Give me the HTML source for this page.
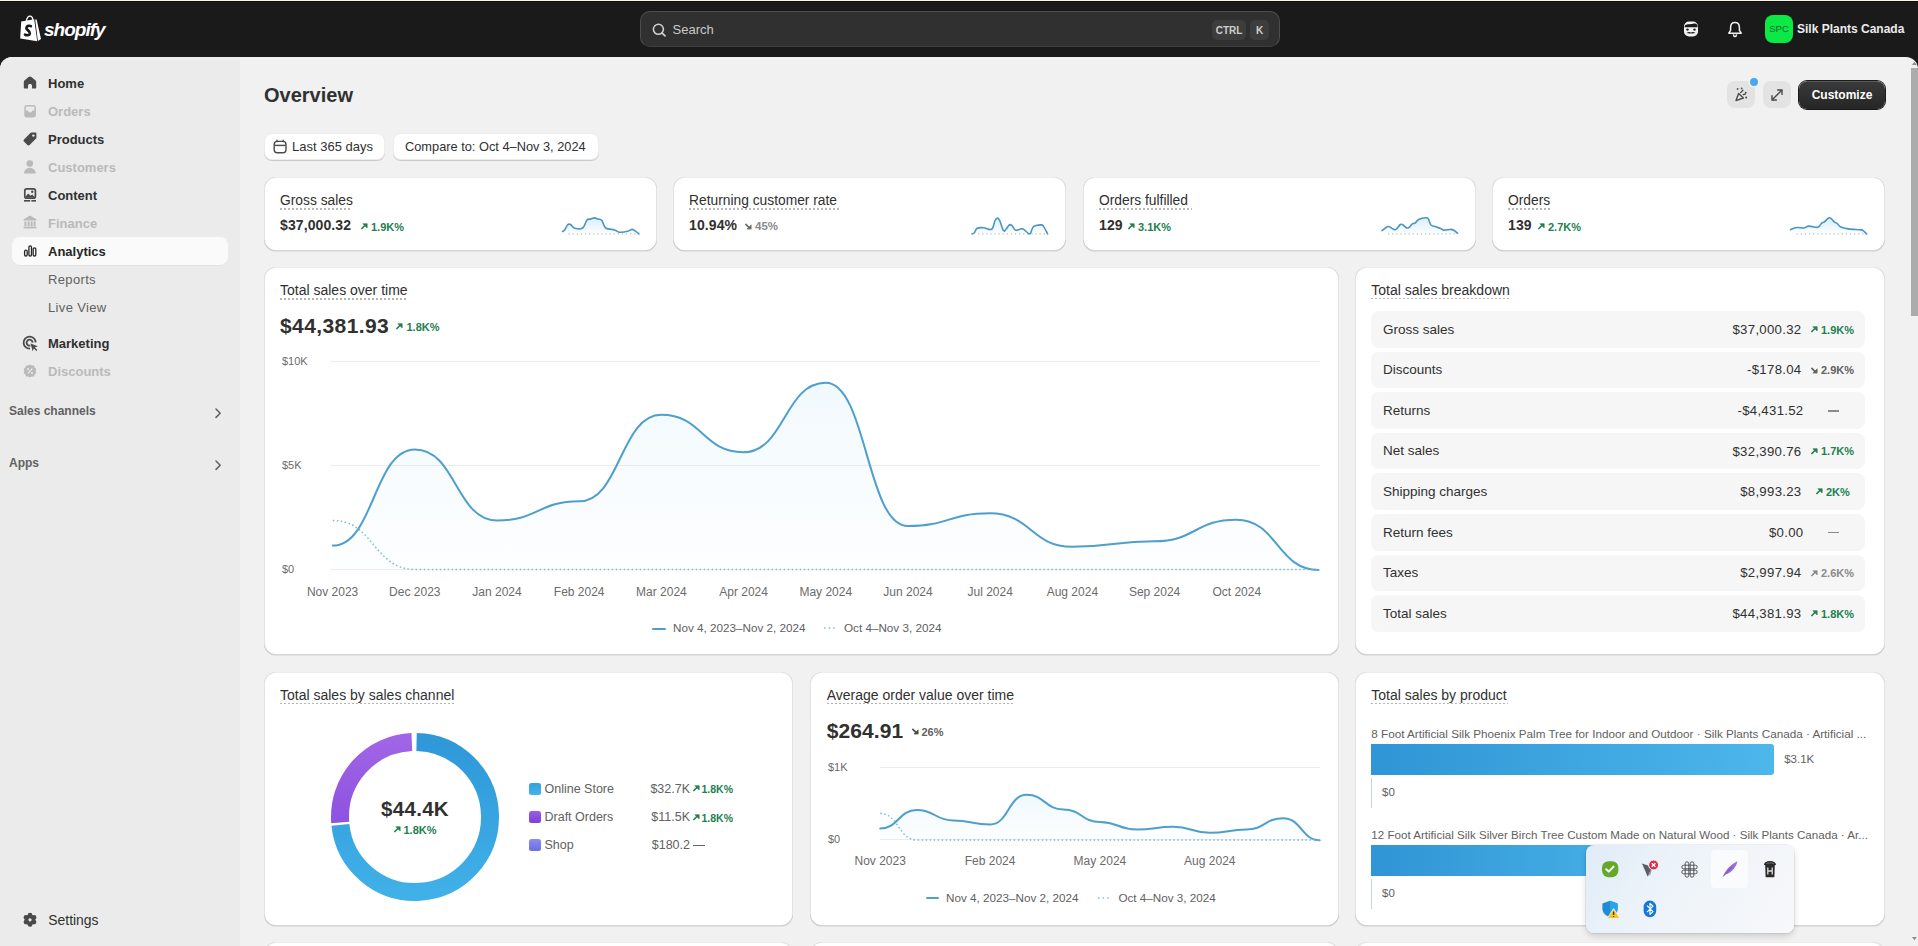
<!DOCTYPE html>
<html><head><meta charset="utf-8">
<style>
*{box-sizing:border-box;margin:0;padding:0}
html,body{width:1918px;height:946px;overflow:hidden;background:#1a1a1a;font-family:"Liberation Sans",sans-serif;color:#303030}
body{position:relative}
.abs{position:absolute}
.t{position:absolute;white-space:nowrap;line-height:1}
.card{position:absolute;background:#fff;border-radius:12px;box-shadow:0 1px 0 0 rgba(26,26,26,.07),inset 0 -1px 0 0 rgba(0,0,0,.16),inset 1px 0 0 0 rgba(0,0,0,.11),inset -1px 0 0 0 rgba(0,0,0,.11),inset 0 1px 0 0 rgba(0,0,0,.07)}
.dot{background-image:linear-gradient(to right,#bdbdbd 50%,transparent 50%);background-size:4px 1.5px;background-repeat:repeat-x}
</style></head><body>

<div class="abs" style="left:0px;top:0px;width:1918px;height:1px;background:#fbf5ee"></div>
<div class="abs" style="left:0px;top:1px;width:1918px;height:1px;background:#110d0a"></div>
<div class="abs" style="left:0px;top:57px;width:1918px;height:889px;background:#f1f1f1;border-top-left-radius:12px;border-top-right-radius:12px"></div>
<div class="abs" style="left:0px;top:57px;width:240px;height:889px;background:#ebebeb;border-top-left-radius:12px"></div>
<div class="abs" style="left:1911px;top:68px;width:7px;height:248px;background:#acacac"></div>
<svg class="abs" style="left:18px;top:14px;" width="26" height="30" viewBox="0 0 26 30">
<path d="M3.2 7.6 L16.2 5.2 L19.2 27.2 L2.2 24.4 Z" fill="#fff"/>
<path d="M17.2 5.4 L18.6 5.6 L23 25 L19.9 27 Z" fill="#fff"/>
<path d="M8.4 7.2 C8.6 3.6 10.6 1.9 12.4 2.2 C14 2.5 14.8 4.2 15 6.2" stroke="#fff" stroke-width="1.3" fill="none"/>
<path d="M12.8 12.2 C11.6 11.4 8.6 11.6 8.4 14 C8.2 16.4 12.2 16.6 11.8 19.4 C11.4 21.6 8.6 21.6 7 20.6" stroke="#1a1a1a" stroke-width="2.7" fill="none" stroke-linecap="round"/>
</svg>
<div class="t" style="top:20.22px;font-size:19px;font-weight:700;color:#ffffff;left:44px;font-style:italic;letter-spacing:-1px">shopify</div>
<div class="abs" style="left:640px;top:11px;width:640px;height:36px;background:#303030;border:1px solid #4d4d4d;border-bottom-color:#3d3d3d;border-radius:10px"></div>
<svg class="abs" style="left:650px;top:21px;" width="18" height="18" viewBox="0 0 18 18"><circle cx="8.4" cy="8.3" r="5" stroke="#cfcfcf" stroke-width="1.6" fill="none"/><path d="M12 11.9 L15 14.9" stroke="#cfcfcf" stroke-width="1.7" stroke-linecap="round"/></svg>
<div class="t" style="top:23.00px;font-size:13px;font-weight:400;color:#c9c9c9;left:672.5px;">Search</div>
<div class="abs" style="left:1212px;top:20px;width:34px;height:20px;background:#3d3d3d;border-radius:5px"></div>
<div class="t" style="top:25.54px;font-size:10px;font-weight:700;color:#cfcfcf;left:929px;width:600px;text-align:center;">CTRL</div>
<div class="abs" style="left:1250px;top:20px;width:19px;height:20px;background:#3d3d3d;border-radius:5px"></div>
<div class="t" style="top:25.54px;font-size:10px;font-weight:700;color:#cfcfcf;left:959.5px;width:600px;text-align:center;">K</div>
<svg class="abs" style="left:1682px;top:19px;" width="18" height="20" viewBox="0 0 18 20">
<rect x="2" y="2.5" width="14" height="15" rx="5" fill="#f2f2f2"/>
<path d="M3 6.5 C5 4.2 9 6 12 4.6 C13.5 4 15 5 15.5 6.5 L15.5 8.2 L2.5 8.2 Z" fill="#1a1a1a"/>
<circle cx="5.5" cy="10.6" r="1.2" fill="#1a1a1a"/><circle cx="12.5" cy="10.6" r="1.2" fill="#1a1a1a"/>
<path d="M4.5 14 C6.5 12.4 8 12.8 9 13.6 C10 12.8 11.5 12.4 13.5 14 C11.5 14.6 10 14.6 9 14.2 C8 14.6 6.5 14.6 4.5 14 Z" fill="#1a1a1a"/>
</svg>
<svg class="abs" style="left:1726px;top:20px;" width="18" height="18" viewBox="0 0 18 18">
<path d="M9 2.6 C6.2 2.6 4.6 4.8 4.6 7.6 L4.6 10.4 L2.8 13.2 L15.2 13.2 L13.4 10.4 L13.4 7.6 C13.4 4.8 11.8 2.6 9 2.6 Z" stroke="#f2f2f2" stroke-width="1.5" fill="none" stroke-linejoin="round"/>
<path d="M7.4 14.4 C7.6 16 8.3 16.6 9 16.6 C9.7 16.6 10.4 16 10.6 14.4" stroke="#f2f2f2" stroke-width="1.5" fill="none"/>
</svg>
<div class="abs" style="left:1765px;top:15px;width:28px;height:28px;background:#0ce845;border-radius:8px"></div>
<div class="t" style="top:24.16px;font-size:9.5px;font-weight:400;color:#0a6e2a;left:1479px;width:600px;text-align:center;">SPC</div>
<div class="t" style="top:22.84px;font-size:12px;font-weight:700;color:#ececec;left:1797px;">Silk Plants Canada</div>
<div class="abs" style="left:12px;top:237px;width:216px;height:28px;background:#fafafa;border-radius:8px;box-shadow:0 1px 0 rgba(0,0,0,.03)"></div>
<div class="t" style="top:77.00px;font-size:13px;font-weight:700;color:#303030;left:48px;">Home</div>
<div class="t" style="top:105.00px;font-size:13px;font-weight:700;color:#bababa;left:48px;">Orders</div>
<div class="t" style="top:133.00px;font-size:13px;font-weight:700;color:#303030;left:48px;">Products</div>
<div class="t" style="top:161.00px;font-size:13px;font-weight:700;color:#bababa;left:48px;">Customers</div>
<div class="t" style="top:189.00px;font-size:13px;font-weight:700;color:#303030;left:48px;">Content</div>
<div class="t" style="top:217.00px;font-size:13px;font-weight:700;color:#bababa;left:48px;">Finance</div>
<div class="t" style="top:245.00px;font-size:13px;font-weight:700;color:#262626;left:48px;">Analytics</div>
<div class="t" style="top:273.20px;font-size:13px;font-weight:400;color:#616161;left:48px;letter-spacing:.35px">Reports</div>
<div class="t" style="top:301.20px;font-size:13px;font-weight:400;color:#616161;left:48px;letter-spacing:.35px">Live View</div>
<div class="t" style="top:337.00px;font-size:13px;font-weight:700;color:#303030;left:48px;">Marketing</div>
<div class="t" style="top:365.00px;font-size:13px;font-weight:700;color:#bababa;left:48px;">Discounts</div>
<div class="t" style="top:405.04px;font-size:12px;font-weight:700;color:#616161;left:9px;">Sales channels</div>
<div class="t" style="top:457.44px;font-size:12px;font-weight:700;color:#616161;left:9px;">Apps</div>
<svg class="abs" style="left:211px;top:404.5px;" width="14" height="16" viewBox="0 0 14 16"><path d="M5 4 L9.2 8.2 L5 12.4" stroke="#616161" stroke-width="1.5" fill="none" stroke-linecap="round" stroke-linejoin="round"/></svg>
<svg class="abs" style="left:211px;top:456.5px;" width="14" height="16" viewBox="0 0 14 16"><path d="M5 4 L9.2 8.2 L5 12.4" stroke="#616161" stroke-width="1.5" fill="none" stroke-linecap="round" stroke-linejoin="round"/></svg>
<div class="t" style="top:914.03px;font-size:13.9px;font-weight:400;color:#303030;left:48.3px;">Settings</div>
<svg class="abs" style="left:20px;top:73px;" width="20" height="20" viewBox="0 0 20 20"><path d="M10 3.4 C10.6 3.4 11 3.7 11.4 4 L15.6 7.6 C16 8 16.2 8.4 16.2 9 L16.2 14.4 C16.2 15.2 15.6 15.6 14.9 15.6 L12 15.6 L12 12.6 C12 11.6 11.2 11 10 11 C8.8 11 8 11.6 8 12.6 L8 15.6 L5.1 15.6 C4.4 15.6 3.8 15.2 3.8 14.4 L3.8 9 C3.8 8.4 4 8 4.4 7.6 L8.6 4 C9 3.7 9.4 3.4 10 3.4 Z" fill="#4a4a4a"/></svg>
<svg class="abs" style="left:20px;top:100.5px;" width="20" height="20" viewBox="0 0 20 20"><rect x="4.3" y="4" width="11.6" height="12.4" rx="2.6" fill="#bababa"/><path d="M5.8 5.6 L14.4 5.6 L14.4 9.6 L12.4 9.6 C12 10.8 11.2 11.4 10.1 11.4 C9 11.4 8.2 10.8 7.8 9.6 L5.8 9.6 Z" fill="#ebebeb"/></svg>
<svg class="abs" style="left:20px;top:129px;" width="20" height="20" viewBox="0 0 20 20"><path d="M11.6 3.6 L15.4 3.6 C16 3.6 16.4 4 16.4 4.6 L16.4 8.4 C16.4 9 16.2 9.4 15.8 9.8 L9.6 16 C9 16.6 8 16.6 7.4 16 L4 12.6 C3.4 12 3.4 11 4 10.4 L10.2 4.2 C10.6 3.8 11 3.6 11.6 3.6 Z" fill="#4a4a4a"/><circle cx="13.4" cy="6.6" r="1.2" fill="#ebebeb"/></svg>
<svg class="abs" style="left:20px;top:155px;" width="20" height="20" viewBox="0 0 20 20"><circle cx="9.8" cy="8.5" r="3.3" fill="#bababa"/><path d="M4 18.6 C4 15.4 6.6 12.8 9.8 12.8 C13 12.8 15.8 15.4 15.8 18.6 Z" fill="#bababa"/></svg>
<svg class="abs" style="left:20px;top:185px;" width="20" height="20" viewBox="0 0 20 20"><rect x="4.8" y="3.8" width="10.6" height="9.4" rx="2" stroke="#4a4a4a" stroke-width="1.7" fill="none"/><path d="M5.6 11.4 L8.2 8.6 L10.6 10.8 L12.2 9.6 L14.6 12 L14.6 12.6 L5.6 12.6 Z" fill="#4a4a4a"/><circle cx="12.2" cy="6.8" r="1.2" fill="#4a4a4a"/><rect x="4" y="15" width="6.2" height="1.6" fill="#4a4a4a"/><rect x="11.4" y="15" width="4.6" height="1.6" fill="#4a4a4a"/></svg>
<svg class="abs" style="left:20px;top:212px;" width="20" height="20" viewBox="0 0 20 20"><path d="M10 3.6 L16.4 7.2 L16.4 8.6 L3.6 8.6 L3.6 7.2 Z" fill="#bababa"/><rect x="4.4" y="9.4" width="2" height="4.6" fill="#bababa"/><rect x="7.6" y="9.4" width="2" height="4.6" fill="#bababa"/><rect x="10.6" y="9.4" width="2" height="4.6" fill="#bababa"/><rect x="13.6" y="9.4" width="2" height="4.6" fill="#bababa"/><rect x="3.6" y="14.6" width="12.8" height="1.8" fill="#bababa"/></svg>
<svg class="abs" style="left:20px;top:241px;" width="20" height="20" viewBox="0 0 20 20"><rect x="4.6" y="9.2" width="2.6" height="5.8" rx="1.3" stroke="#262626" stroke-width="1.3" fill="none"/><rect x="8.9" y="4.8" width="2.6" height="10.2" rx="1.3" stroke="#262626" stroke-width="1.3" fill="none"/><rect x="13.2" y="6.8" width="2.6" height="8.2" rx="1.3" stroke="#262626" stroke-width="1.3" fill="none"/></svg>
<svg class="abs" style="left:20px;top:333px;" width="20" height="20" viewBox="0 0 20 20"><path d="M15.6 9.4 A6 6 0 1 0 10 15.6" stroke="#4a4a4a" stroke-width="1.8" fill="none"/><path d="M12.6 9.6 A3 3 0 1 0 10.4 12.6" stroke="#4a4a4a" stroke-width="1.8" fill="none"/><path d="M10.6 10.6 L17.8 13.2 L14.8 14.4 L17.4 17 L16.4 18 L13.8 15.4 L12.6 18.2 Z" fill="#4a4a4a"/></svg>
<svg class="abs" style="left:20px;top:361px;" width="20" height="20" viewBox="0 0 20 20"><path d="M10 3.4 L11.8 4.6 L14 4.6 L14.6 6.6 L16.4 8 L15.6 10 L16.4 12 L14.6 13.4 L14 15.4 L11.8 15.4 L10 16.6 L8.2 15.4 L6 15.4 L5.4 13.4 L3.6 12 L4.4 10 L3.6 8 L5.4 6.6 L6 4.6 L8.2 4.6 Z" fill="#bababa"/><path d="M7.8 12.4 L12.2 7.6" stroke="#ebebeb" stroke-width="1.3"/><circle cx="8" cy="8" r="1" fill="#ebebeb"/><circle cx="12" cy="12" r="1" fill="#ebebeb"/></svg>
<svg class="abs" style="left:20px;top:910px;" width="20" height="20" viewBox="0 0 20 20"><circle cx="10" cy="9.8" r="5.2" fill="#4a4a4a"/><circle cx="10.00" cy="5.20" r="2.4" fill="#4a4a4a"/><circle cx="13.98" cy="7.50" r="2.4" fill="#4a4a4a"/><circle cx="13.98" cy="12.10" r="2.4" fill="#4a4a4a"/><circle cx="10.00" cy="14.40" r="2.4" fill="#4a4a4a"/><circle cx="6.02" cy="12.10" r="2.4" fill="#4a4a4a"/><circle cx="6.02" cy="7.50" r="2.4" fill="#4a4a4a"/><circle cx="10" cy="9.8" r="1.6" fill="#ebebeb"/></svg>
<div class="t" style="top:85.07px;font-size:20px;font-weight:700;color:#303030;left:264px;">Overview</div>
<div class="abs" style="left:1727px;top:81px;width:28px;height:27px;background:#e3e3e3;border-radius:8px"></div>
<div class="abs" style="left:1763px;top:81px;width:28px;height:27px;background:#e3e3e3;border-radius:8px"></div>
<div class="abs" style="left:1750px;top:78px;width:8px;height:8px;background:#4aa8f0;border-radius:50%;box-shadow:0 0 0 1.5px #f1f1f1"></div>
<svg class="abs" style="left:1731px;top:84px;" width="20" height="20" viewBox="0 0 20 20">
<path d="M5 16.6 L7.6 9.4 L12.4 14 Z" stroke="#4a4a4a" stroke-width="1.4" fill="none" stroke-linejoin="round"/>
<circle cx="6.6" cy="5" r="0.9" fill="#4a4a4a"/><circle cx="10.6" cy="4.4" r="0.9" fill="#4a4a4a"/><circle cx="14.8" cy="8.6" r="0.9" fill="#4a4a4a"/><circle cx="15.2" cy="13.4" r="1" fill="#4a4a4a"/>
<path d="M9.6 8.6 L12 6.2 M12.2 10.6 L14.4 10" stroke="#4a4a4a" stroke-width="1.3" stroke-linecap="round"/>
</svg>
<svg class="abs" style="left:1767px;top:85px;" width="20" height="20" viewBox="0 0 20 20">
<path d="M5.2 14.8 L14.8 5.2" stroke="#4a4a4a" stroke-width="1.4" stroke-linecap="round"/>
<path d="M10.6 5 L15 5 L15 9.4" stroke="#4a4a4a" stroke-width="1.4" fill="none" stroke-linecap="round" stroke-linejoin="round"/>
<path d="M5 10.6 L5 15 L9.4 15" stroke="#4a4a4a" stroke-width="1.4" fill="none" stroke-linecap="round" stroke-linejoin="round"/>
</svg>
<div class="abs" style="left:1799px;top:81px;width:86px;height:28px;background:linear-gradient(#3a3a3a,#262626);border-radius:8px;box-shadow:0 0 0 1px #1a1a1a,inset 0 1px 0 rgba(255,255,255,.18)"></div>
<div class="t" style="top:89.14px;font-size:12px;font-weight:700;color:#ffffff;left:1542px;width:600px;text-align:center;">Customize</div>
<div class="abs" style="left:264px;top:133px;width:121px;height:27px;background:#fff;border-radius:8px;box-shadow:0 1px 0 0 rgba(0,0,0,.16),inset 0 0 0 1px rgba(0,0,0,.07)"></div>
<svg class="abs" style="left:271px;top:137px;" width="20" height="20" viewBox="0 0 20 20"><rect x="3.2" y="4.4" width="11.8" height="11.4" rx="3" stroke="#4a4a4a" stroke-width="1.4" fill="none"/><path d="M3.6 8.4 L14.6 8.4" stroke="#4a4a4a" stroke-width="1.4"/><path d="M6 3.2 L6 4.6 M12.2 3.2 L12.2 4.6" stroke="#4a4a4a" stroke-width="1.3" stroke-linecap="round"/></svg>
<div class="t" style="top:140.20px;font-size:13px;font-weight:400;color:#303030;left:292px;">Last 365 days</div>
<div class="abs" style="left:393px;top:133px;width:206px;height:27px;background:#fff;border-radius:8px;box-shadow:0 1px 0 0 rgba(0,0,0,.16),inset 0 0 0 1px rgba(0,0,0,.07)"></div>
<div class="t" style="top:141.16px;font-size:12.8px;font-weight:400;color:#303030;left:405px;">Compare to: Oct 4–Nov 3, 2024</div>
<div class="card" style="left:264px;top:177px;width:393px;height:74px"></div>
<div class="t" style="top:193.52px;font-size:13.8px;font-weight:400;color:#303030;left:280px;">Gross sales</div>
<div class="abs" style="left:280px;top:208.2px;width:72px;height:1.5px;background-image:linear-gradient(to right,#b8b8b8 50%,transparent 50%);background-size:4px 1.5px"></div>
<div class="t" style="top:218.15px;font-size:14px;font-weight:700;color:#303030;left:280px;letter-spacing:.1px">$37,000.32</div>
<div class="card" style="left:673px;top:177px;width:393px;height:74px"></div>
<div class="t" style="top:193.52px;font-size:13.8px;font-weight:400;color:#303030;left:689px;">Returning customer rate</div>
<div class="abs" style="left:689px;top:208.2px;width:151px;height:1.5px;background-image:linear-gradient(to right,#b8b8b8 50%,transparent 50%);background-size:4px 1.5px"></div>
<div class="t" style="top:218.15px;font-size:14px;font-weight:700;color:#303030;left:689px;letter-spacing:.1px">10.94%</div>
<div class="card" style="left:1083px;top:177px;width:393px;height:74px"></div>
<div class="t" style="top:193.52px;font-size:13.8px;font-weight:400;color:#303030;left:1099px;">Orders fulfilled</div>
<div class="abs" style="left:1099px;top:208.2px;width:93px;height:1.5px;background-image:linear-gradient(to right,#b8b8b8 50%,transparent 50%);background-size:4px 1.5px"></div>
<div class="t" style="top:218.15px;font-size:14px;font-weight:700;color:#303030;left:1099px;letter-spacing:.1px">129</div>
<div class="card" style="left:1492px;top:177px;width:393px;height:74px"></div>
<div class="t" style="top:193.52px;font-size:13.8px;font-weight:400;color:#303030;left:1508px;">Orders</div>
<div class="abs" style="left:1508px;top:208.2px;width:43px;height:1.5px;background-image:linear-gradient(to right,#b8b8b8 50%,transparent 50%);background-size:4px 1.5px"></div>
<div class="t" style="top:218.15px;font-size:14px;font-weight:700;color:#303030;left:1508px;letter-spacing:.1px">139</div>
<svg class="abs" style="left:361px;top:223px;" width="8" height="8" viewBox="0 0 8 8"><path d="M0.9 5.5 L4.4 2" stroke="#22804f" stroke-width="1.7" stroke-linecap="round"/><path d="M1.9 0.7 L6.2 0.7 L6.2 5 Z" fill="#22804f" stroke="#22804f" stroke-width="0.6" stroke-linejoin="round"/></svg>
<div class="t" style="top:221.69px;font-size:11px;font-weight:700;color:#22804f;left:371px;">1.9K%</div>
<svg class="abs" style="left:745px;top:223px;" width="8" height="8" viewBox="0 0 8 8"><path d="M0.9 1.3 L4.4 4.8" stroke="#6b6b6b" stroke-width="1.7" stroke-linecap="round"/><path d="M1.9 6.1 L6.2 6.1 L6.2 1.8 Z" fill="#6b6b6b" stroke="#6b6b6b" stroke-width="0.6" stroke-linejoin="round"/></svg>
<div class="t" style="top:221.27px;font-size:11.5px;font-weight:700;color:#8a8a8a;left:755px;">45%</div>
<svg class="abs" style="left:1128px;top:223px;" width="8" height="8" viewBox="0 0 8 8"><path d="M0.9 5.5 L4.4 2" stroke="#22804f" stroke-width="1.7" stroke-linecap="round"/><path d="M1.9 0.7 L6.2 0.7 L6.2 5 Z" fill="#22804f" stroke="#22804f" stroke-width="0.6" stroke-linejoin="round"/></svg>
<div class="t" style="top:221.69px;font-size:11px;font-weight:700;color:#22804f;left:1138px;">3.1K%</div>
<svg class="abs" style="left:1538px;top:223px;" width="8" height="8" viewBox="0 0 8 8"><path d="M0.9 5.5 L4.4 2" stroke="#22804f" stroke-width="1.7" stroke-linecap="round"/><path d="M1.9 0.7 L6.2 0.7 L6.2 5 Z" fill="#22804f" stroke="#22804f" stroke-width="0.6" stroke-linejoin="round"/></svg>
<div class="t" style="top:221.69px;font-size:11px;font-weight:700;color:#22804f;left:1548px;">2.7K%</div>
<svg class="abs" style="left:558px;top:205px;" width="90" height="35" viewBox="0 0 90 35"><path d="M10.5 28.9 L79.0 28.9" stroke="#c2c2c2" stroke-width="1.3" stroke-dasharray="1.3 2.8"/><defs><linearGradient id="sp0" x1="0" y1="12.900000000000006" x2="0" y2="29" gradientUnits="userSpaceOnUse"><stop offset="0" stop-color="#58b4e6" stop-opacity="0.22"/><stop offset="1" stop-color="#58b4e6" stop-opacity="0.01"/></linearGradient></defs><path d="M4.5 26.5 C4.8 26.3 5.5 26.4 6.4 25.3 C7.3 24.2 8.7 20.7 9.7 19.7 C10.7 18.7 11.3 18.9 12.5 19.5 C13.7 20.1 14.7 22.6 16.7 23.2 C18.7 23.8 22.7 24.4 24.7 23.0 C26.7 21.6 27.6 16.5 28.9 15.0 C30.2 13.5 31.5 14.4 32.7 14.1 C34.0 13.7 35.1 12.9 36.4 12.9 C37.6 12.9 39.0 13.7 40.2 14.1 C41.5 14.5 42.6 14.0 43.9 15.5 C45.1 17.0 45.6 21.4 47.7 23.0 C49.8 24.6 54.3 24.2 56.6 24.9 C58.9 25.6 59.1 27.0 61.3 27.2 C63.5 27.4 67.6 26.8 69.7 26.3 C71.8 25.8 72.7 24.4 74.0 24.4 C75.3 24.4 76.5 25.6 77.7 26.3 C78.9 27.1 80.5 28.5 81.0 28.9 L81.0 29 L4.5 29 Z" fill="url(#sp0)"/><path d="M4.5 26.5 C4.8 26.3 5.5 26.4 6.4 25.3 C7.3 24.2 8.7 20.7 9.7 19.7 C10.7 18.7 11.3 18.9 12.5 19.5 C13.7 20.1 14.7 22.6 16.7 23.2 C18.7 23.8 22.7 24.4 24.7 23.0 C26.7 21.6 27.6 16.5 28.9 15.0 C30.2 13.5 31.5 14.4 32.7 14.1 C34.0 13.7 35.1 12.9 36.4 12.9 C37.6 12.9 39.0 13.7 40.2 14.1 C41.5 14.5 42.6 14.0 43.9 15.5 C45.1 17.0 45.6 21.4 47.7 23.0 C49.8 24.6 54.3 24.2 56.6 24.9 C58.9 25.6 59.1 27.0 61.3 27.2 C63.5 27.4 67.6 26.8 69.7 26.3 C71.8 25.8 72.7 24.4 74.0 24.4 C75.3 24.4 76.5 25.6 77.7 26.3 C78.9 27.1 80.5 28.5 81.0 28.9" stroke="#4b95c2" stroke-width="1.6" fill="none" stroke-linecap="round"/></svg>
<svg class="abs" style="left:968px;top:205px;" width="90" height="35" viewBox="0 0 90 35"><path d="M10.0 28.9 L77.6 28.9" stroke="#c2c2c2" stroke-width="1.3" stroke-dasharray="1.3 2.8"/><defs><linearGradient id="sp1" x1="0" y1="13.099999999999994" x2="0" y2="29" gradientUnits="userSpaceOnUse"><stop offset="0" stop-color="#58b4e6" stop-opacity="0.22"/><stop offset="1" stop-color="#58b4e6" stop-opacity="0.01"/></linearGradient></defs><path d="M4.0 28.9 C4.4 28.7 5.5 28.6 6.4 27.7 C7.3 26.7 7.6 24.0 9.2 23.2 C10.8 22.4 13.4 22.6 15.8 22.8 C18.2 23.0 21.8 25.4 23.7 24.2 C25.6 23.0 26.1 17.3 27.0 15.5 C27.9 13.7 28.6 13.1 29.4 13.1 C30.2 13.1 30.7 13.4 31.7 15.5 C32.7 17.6 34.4 24.2 35.5 25.6 C36.6 27.0 37.3 24.9 38.3 23.9 C39.3 22.9 40.6 20.2 41.6 19.7 C42.6 19.2 43.4 20.2 44.4 21.1 C45.4 22.0 46.2 24.9 47.7 25.3 C49.2 25.7 52.0 23.8 53.3 23.7 C54.6 23.5 54.5 23.6 55.7 24.4 C57.0 25.2 59.6 28.1 60.8 28.7 C62.0 29.3 61.9 29.1 62.7 27.9 C63.5 26.7 63.8 22.9 65.5 21.6 C67.2 20.3 71.3 20.0 73.0 19.9 C74.7 19.8 74.3 19.6 75.4 21.1 C76.5 22.6 78.9 27.6 79.6 28.9 L79.6 29 L4.0 29 Z" fill="url(#sp1)"/><path d="M4.0 28.9 C4.4 28.7 5.5 28.6 6.4 27.7 C7.3 26.7 7.6 24.0 9.2 23.2 C10.8 22.4 13.4 22.6 15.8 22.8 C18.2 23.0 21.8 25.4 23.7 24.2 C25.6 23.0 26.1 17.3 27.0 15.5 C27.9 13.7 28.6 13.1 29.4 13.1 C30.2 13.1 30.7 13.4 31.7 15.5 C32.7 17.6 34.4 24.2 35.5 25.6 C36.6 27.0 37.3 24.9 38.3 23.9 C39.3 22.9 40.6 20.2 41.6 19.7 C42.6 19.2 43.4 20.2 44.4 21.1 C45.4 22.0 46.2 24.9 47.7 25.3 C49.2 25.7 52.0 23.8 53.3 23.7 C54.6 23.5 54.5 23.6 55.7 24.4 C57.0 25.2 59.6 28.1 60.8 28.7 C62.0 29.3 61.9 29.1 62.7 27.9 C63.5 26.7 63.8 22.9 65.5 21.6 C67.2 20.3 71.3 20.0 73.0 19.9 C74.7 19.8 74.3 19.6 75.4 21.1 C76.5 22.6 78.9 27.6 79.6 28.9" stroke="#4b95c2" stroke-width="1.6" fill="none" stroke-linecap="round"/></svg>
<svg class="abs" style="left:1378px;top:205px;" width="90" height="35" viewBox="0 0 90 35"><path d="M10.0 28.9 L77.6 28.9" stroke="#c2c2c2" stroke-width="1.3" stroke-dasharray="1.3 2.8"/><defs><linearGradient id="sp2" x1="0" y1="12.699999999999989" x2="0" y2="29" gradientUnits="userSpaceOnUse"><stop offset="0" stop-color="#58b4e6" stop-opacity="0.22"/><stop offset="1" stop-color="#58b4e6" stop-opacity="0.01"/></linearGradient></defs><path d="M4.0 25.6 C5.0 24.9 8.3 22.1 9.7 21.6 C11.1 21.1 11.4 22.0 12.5 22.5 C13.6 23.0 15.2 24.4 16.2 24.6 C17.2 24.8 17.6 24.8 18.6 23.9 C19.6 23.1 21.3 20.2 22.3 19.5 C23.3 18.8 23.6 19.1 24.7 19.7 C25.8 20.3 27.7 22.6 28.9 23.0 C30.1 23.4 30.8 22.4 31.7 21.8 C32.6 21.2 33.1 19.9 34.1 19.2 C35.0 18.5 36.3 18.6 37.4 17.8 C38.5 17.0 38.8 15.4 40.6 14.5 C42.4 13.6 46.6 12.8 48.2 12.7 C49.9 12.6 49.7 12.9 50.5 14.1 C51.3 15.3 51.7 18.4 52.8 19.7 C53.9 20.9 55.3 21.0 57.0 21.6 C58.7 22.2 61.2 22.9 62.7 23.5 C64.2 24.1 64.3 24.9 66.0 25.1 C67.7 25.2 71.4 24.4 73.0 24.4 C74.6 24.4 74.7 24.7 75.8 25.3 C76.9 25.9 79.0 27.7 79.6 28.2 L79.6 29 L4.0 29 Z" fill="url(#sp2)"/><path d="M4.0 25.6 C5.0 24.9 8.3 22.1 9.7 21.6 C11.1 21.1 11.4 22.0 12.5 22.5 C13.6 23.0 15.2 24.4 16.2 24.6 C17.2 24.8 17.6 24.8 18.6 23.9 C19.6 23.1 21.3 20.2 22.3 19.5 C23.3 18.8 23.6 19.1 24.7 19.7 C25.8 20.3 27.7 22.6 28.9 23.0 C30.1 23.4 30.8 22.4 31.7 21.8 C32.6 21.2 33.1 19.9 34.1 19.2 C35.0 18.5 36.3 18.6 37.4 17.8 C38.5 17.0 38.8 15.4 40.6 14.5 C42.4 13.6 46.6 12.8 48.2 12.7 C49.9 12.6 49.7 12.9 50.5 14.1 C51.3 15.3 51.7 18.4 52.8 19.7 C53.9 20.9 55.3 21.0 57.0 21.6 C58.7 22.2 61.2 22.9 62.7 23.5 C64.2 24.1 64.3 24.9 66.0 25.1 C67.7 25.2 71.4 24.4 73.0 24.4 C74.6 24.4 74.7 24.7 75.8 25.3 C76.9 25.9 79.0 27.7 79.6 28.2" stroke="#4b95c2" stroke-width="1.6" fill="none" stroke-linecap="round"/></svg>
<svg class="abs" style="left:1786px;top:205px;" width="90" height="35" viewBox="0 0 90 35"><path d="M10.6 28.9 L78.7 28.9" stroke="#c2c2c2" stroke-width="1.3" stroke-dasharray="1.3 2.8"/><defs><linearGradient id="sp3" x1="0" y1="12.900000000000006" x2="0" y2="29" gradientUnits="userSpaceOnUse"><stop offset="0" stop-color="#58b4e6" stop-opacity="0.22"/><stop offset="1" stop-color="#58b4e6" stop-opacity="0.01"/></linearGradient></defs><path d="M4.6 24.6 C5.6 24.2 8.5 22.8 10.7 22.5 C12.9 22.2 15.8 23.2 17.8 23.0 C19.8 22.8 20.6 21.2 22.9 21.1 C25.2 21.0 29.7 22.8 31.8 22.3 C33.9 21.8 34.5 19.0 35.6 18.1 C36.7 17.2 37.2 17.8 38.4 16.9 C39.6 16.0 41.4 13.4 42.6 12.9 C43.8 12.4 44.5 13.1 45.5 13.8 C46.5 14.5 47.3 16.1 48.3 16.9 C49.3 17.7 50.6 18.0 51.6 18.8 C52.6 19.6 52.6 21.0 54.4 21.8 C56.2 22.7 59.0 23.4 62.4 23.9 C65.8 24.4 72.5 24.6 75.0 24.9 C77.5 25.2 76.5 25.1 77.4 25.8 C78.4 26.5 80.2 28.4 80.7 28.9 L80.7 29 L4.6 29 Z" fill="url(#sp3)"/><path d="M4.6 24.6 C5.6 24.2 8.5 22.8 10.7 22.5 C12.9 22.2 15.8 23.2 17.8 23.0 C19.8 22.8 20.6 21.2 22.9 21.1 C25.2 21.0 29.7 22.8 31.8 22.3 C33.9 21.8 34.5 19.0 35.6 18.1 C36.7 17.2 37.2 17.8 38.4 16.9 C39.6 16.0 41.4 13.4 42.6 12.9 C43.8 12.4 44.5 13.1 45.5 13.8 C46.5 14.5 47.3 16.1 48.3 16.9 C49.3 17.7 50.6 18.0 51.6 18.8 C52.6 19.6 52.6 21.0 54.4 21.8 C56.2 22.7 59.0 23.4 62.4 23.9 C65.8 24.4 72.5 24.6 75.0 24.9 C77.5 25.2 76.5 25.1 77.4 25.8 C78.4 26.5 80.2 28.4 80.7 28.9" stroke="#4b95c2" stroke-width="1.6" fill="none" stroke-linecap="round"/></svg>
<div class="card" style="left:264px;top:267px;width:1075px;height:388px"></div>
<div class="t" style="top:283.45px;font-size:14px;font-weight:400;color:#303030;left:280px;">Total sales over time</div>
<div class="abs" style="left:280px;top:298.4px;width:128px;height:1.5px;background-image:linear-gradient(to right,#b4b4b4 50%,transparent 50%);background-size:4px 1.5px"></div>
<div class="t" style="top:315.42px;font-size:21px;font-weight:700;color:#303030;left:280px;letter-spacing:.4px">$44,381.93</div>
<svg class="abs" style="left:396px;top:323px;" width="8" height="8" viewBox="0 0 8 8"><path d="M0.9 5.5 L4.4 2" stroke="#22804f" stroke-width="1.7" stroke-linecap="round"/><path d="M1.9 0.7 L6.2 0.7 L6.2 5 Z" fill="#22804f" stroke="#22804f" stroke-width="0.6" stroke-linejoin="round"/></svg>
<div class="t" style="top:321.69px;font-size:11px;font-weight:700;color:#22804f;left:406.5px;">1.8K%</div>
<div class="abs" style="left:331px;top:361.0px;width:989px;height:1px;background:#ececec"></div>
<div class="t" style="top:356.19px;font-size:11px;font-weight:400;color:#6b6b6b;left:282px;">$10K</div>
<div class="abs" style="left:331px;top:465.0px;width:989px;height:1px;background:#ececec"></div>
<div class="t" style="top:460.19px;font-size:11px;font-weight:400;color:#6b6b6b;left:282px;">$5K</div>
<div class="abs" style="left:331px;top:569.0px;width:989px;height:1px;background:#ececec"></div>
<div class="t" style="top:564.19px;font-size:11px;font-weight:400;color:#6b6b6b;left:282px;">$0</div>
<div class="t" style="top:585.84px;font-size:12px;font-weight:400;color:#6b6b6b;left:32.60000000000002px;width:600px;text-align:center;">Nov 2023</div>
<div class="t" style="top:585.84px;font-size:12px;font-weight:400;color:#6b6b6b;left:114.80000000000001px;width:600px;text-align:center;">Dec 2023</div>
<div class="t" style="top:585.84px;font-size:12px;font-weight:400;color:#6b6b6b;left:197.0px;width:600px;text-align:center;">Jan 2024</div>
<div class="t" style="top:585.84px;font-size:12px;font-weight:400;color:#6b6b6b;left:279.20000000000005px;width:600px;text-align:center;">Feb 2024</div>
<div class="t" style="top:585.84px;font-size:12px;font-weight:400;color:#6b6b6b;left:361.4000000000001px;width:600px;text-align:center;">Mar 2024</div>
<div class="t" style="top:585.84px;font-size:12px;font-weight:400;color:#6b6b6b;left:443.6px;width:600px;text-align:center;">Apr 2024</div>
<div class="t" style="top:585.84px;font-size:12px;font-weight:400;color:#6b6b6b;left:525.8000000000001px;width:600px;text-align:center;">May 2024</div>
<div class="t" style="top:585.84px;font-size:12px;font-weight:400;color:#6b6b6b;left:608.0px;width:600px;text-align:center;">Jun 2024</div>
<div class="t" style="top:585.84px;font-size:12px;font-weight:400;color:#6b6b6b;left:690.2px;width:600px;text-align:center;">Jul 2024</div>
<div class="t" style="top:585.84px;font-size:12px;font-weight:400;color:#6b6b6b;left:772.4000000000001px;width:600px;text-align:center;">Aug 2024</div>
<div class="t" style="top:585.84px;font-size:12px;font-weight:400;color:#6b6b6b;left:854.5999999999999px;width:600px;text-align:center;">Sep 2024</div>
<div class="t" style="top:585.84px;font-size:12px;font-weight:400;color:#6b6b6b;left:936.8000000000002px;width:600px;text-align:center;">Oct 2024</div>
<svg class="abs" style="left:300px;top:340px;" width="1040" height="250" viewBox="0 0 1040 250"><defs><linearGradient id="mainA" x1="0" y1="42.80000000000001" x2="0" y2="229.5" gradientUnits="userSpaceOnUse"><stop offset="0" stop-color="#58b4e6" stop-opacity="0.08"/><stop offset="1" stop-color="#58b4e6" stop-opacity="0.01"/></linearGradient></defs><path d="M32.80 205.60 C73.87 205.60 73.87 109.40 114.94 109.40 C156.01 109.40 156.01 180.50 197.08 180.50 C238.15 180.50 238.15 161.30 279.22 161.30 C320.29 161.30 320.29 74.80 361.36 74.80 C402.43 74.80 402.43 112.20 443.50 112.20 C484.57 112.20 484.57 42.80 525.64 42.80 C566.71 42.80 566.71 186.00 607.78 186.00 C648.85 186.00 648.85 173.30 689.92 173.30 C730.99 173.30 730.99 206.80 772.06 206.80 C813.13 206.80 813.13 201.30 854.20 201.30 C895.27 201.30 895.27 179.70 936.34 179.70 C977.41 179.70 977.41 230.00 1018.48 230.00 L1018.5 229.5 L32.8 229.5 Z" fill="url(#mainA)"/><path d="M32.80 205.60 C73.87 205.60 73.87 109.40 114.94 109.40 C156.01 109.40 156.01 180.50 197.08 180.50 C238.15 180.50 238.15 161.30 279.22 161.30 C320.29 161.30 320.29 74.80 361.36 74.80 C402.43 74.80 402.43 112.20 443.50 112.20 C484.57 112.20 484.57 42.80 525.64 42.80 C566.71 42.80 566.71 186.00 607.78 186.00 C648.85 186.00 648.85 173.30 689.92 173.30 C730.99 173.30 730.99 206.80 772.06 206.80 C813.13 206.80 813.13 201.30 854.20 201.30 C895.27 201.30 895.27 179.70 936.34 179.70 C977.41 179.70 977.41 230.00 1018.48 230.00" stroke="#4e9fcc" stroke-width="2" fill="none" stroke-linecap="round"/><path d="M32.80 180.50 C73.87 180.50 73.87 229.50 114.94 229.50 C566.72 229.50 566.72 229.50 1018.50 229.50" stroke="#7fb8d8" stroke-width="1.5" fill="none" stroke-dasharray="1.5 2.5"/></svg>
<div class="abs" style="left:652px;top:627.5px;width:14px;height:2px;background:#4e9fcc;border-radius:1px"></div>
<div class="t" style="top:622.10px;font-size:11.7px;font-weight:400;color:#616161;left:673px;">Nov 4, 2023–Nov 2, 2024</div>
<svg class="abs" style="left:822px;top:622px;" width="16" height="12" viewBox="0 0 16 12"><path d="M2 6 L14 6" stroke="#8bbfdc" stroke-width="1.6" stroke-dasharray="1.6 3" stroke-linecap="butt"/></svg>
<div class="t" style="top:622.10px;font-size:11.7px;font-weight:400;color:#616161;left:844px;">Oct 4–Nov 3, 2024</div>
<div class="card" style="left:1355px;top:267px;width:530px;height:388px"></div>
<div class="t" style="top:282.95px;font-size:14px;font-weight:400;color:#303030;left:1371.3px;">Total sales breakdown</div>
<div class="abs" style="left:1371.3px;top:297.9px;width:139px;height:1.5px;background-image:linear-gradient(to right,#b4b4b4 50%,transparent 50%);background-size:4px 1.5px"></div>
<div class="abs" style="left:1371px;top:311.0px;width:494px;height:36.5px;background:#f6f6f6;border-radius:8px"></div>
<div class="t" style="top:322.57px;font-size:13.5px;font-weight:400;color:#303030;left:1383px;">Gross sales</div>
<div class="t" style="top:322.83px;font-size:13.2px;font-weight:400;color:#303030;right:116.5px;letter-spacing:.3px">$37,000.32</div>
<svg class="abs" style="left:1811.0px;top:326.0px;" width="8" height="8" viewBox="0 0 8 8"><path d="M0.9 5.5 L4.4 2" stroke="#22804f" stroke-width="1.7" stroke-linecap="round"/><path d="M1.9 0.7 L6.2 0.7 L6.2 5 Z" fill="#22804f" stroke="#22804f" stroke-width="0.6" stroke-linejoin="round"/></svg>
<div class="t" style="top:324.69px;font-size:11px;font-weight:700;color:#22804f;left:1821.0px;">1.9K%</div>
<div class="abs" style="left:1371px;top:351.6px;width:494px;height:36.5px;background:#f6f6f6;border-radius:8px"></div>
<div class="t" style="top:363.17px;font-size:13.5px;font-weight:400;color:#303030;left:1383px;">Discounts</div>
<div class="t" style="top:363.43px;font-size:13.2px;font-weight:400;color:#303030;right:116.5px;letter-spacing:.3px">-$178.04</div>
<svg class="abs" style="left:1811.0px;top:366.6px;" width="8" height="8" viewBox="0 0 8 8"><path d="M0.9 1.3 L4.4 4.8" stroke="#616161" stroke-width="1.7" stroke-linecap="round"/><path d="M1.9 6.1 L6.2 6.1 L6.2 1.8 Z" fill="#616161" stroke="#616161" stroke-width="0.6" stroke-linejoin="round"/></svg>
<div class="t" style="top:365.29px;font-size:11px;font-weight:700;color:#616161;left:1821.0px;">2.9K%</div>
<div class="abs" style="left:1371px;top:392.2px;width:494px;height:36.5px;background:#f6f6f6;border-radius:8px"></div>
<div class="t" style="top:403.77px;font-size:13.5px;font-weight:400;color:#303030;left:1383px;">Returns</div>
<div class="t" style="top:404.03px;font-size:13.2px;font-weight:400;color:#303030;right:114.5px;letter-spacing:.3px">-$4,431.52</div>
<div class="abs" style="left:1827.5px;top:410.0px;width:11.5px;height:1.6px;background:#8a8a8a"></div>
<div class="abs" style="left:1371px;top:432.8px;width:494px;height:36.5px;background:#f6f6f6;border-radius:8px"></div>
<div class="t" style="top:444.37px;font-size:13.5px;font-weight:400;color:#303030;left:1383px;">Net sales</div>
<div class="t" style="top:444.63px;font-size:13.2px;font-weight:400;color:#303030;right:116.5px;letter-spacing:.3px">$32,390.76</div>
<svg class="abs" style="left:1811.0px;top:447.8px;" width="8" height="8" viewBox="0 0 8 8"><path d="M0.9 5.5 L4.4 2" stroke="#22804f" stroke-width="1.7" stroke-linecap="round"/><path d="M1.9 0.7 L6.2 0.7 L6.2 5 Z" fill="#22804f" stroke="#22804f" stroke-width="0.6" stroke-linejoin="round"/></svg>
<div class="t" style="top:446.49px;font-size:11px;font-weight:700;color:#22804f;left:1821.0px;">1.7K%</div>
<div class="abs" style="left:1371px;top:473.4px;width:494px;height:36.5px;background:#f6f6f6;border-radius:8px"></div>
<div class="t" style="top:484.97px;font-size:13.5px;font-weight:400;color:#303030;left:1383px;">Shipping charges</div>
<div class="t" style="top:485.23px;font-size:13.2px;font-weight:400;color:#303030;right:116.5px;letter-spacing:.3px">$8,993.23</div>
<svg class="abs" style="left:1816.0px;top:488.4px;" width="8" height="8" viewBox="0 0 8 8"><path d="M0.9 5.5 L4.4 2" stroke="#22804f" stroke-width="1.7" stroke-linecap="round"/><path d="M1.9 0.7 L6.2 0.7 L6.2 5 Z" fill="#22804f" stroke="#22804f" stroke-width="0.6" stroke-linejoin="round"/></svg>
<div class="t" style="top:487.09px;font-size:11px;font-weight:700;color:#22804f;left:1826.0px;">2K%</div>
<div class="abs" style="left:1371px;top:514.0px;width:494px;height:36.5px;background:#f6f6f6;border-radius:8px"></div>
<div class="t" style="top:525.57px;font-size:13.5px;font-weight:400;color:#303030;left:1383px;">Return fees</div>
<div class="t" style="top:525.83px;font-size:13.2px;font-weight:400;color:#303030;right:114.5px;letter-spacing:.3px">$0.00</div>
<div class="abs" style="left:1827.5px;top:531.8px;width:11.5px;height:1.6px;background:#8a8a8a"></div>
<div class="abs" style="left:1371px;top:554.6px;width:494px;height:36.5px;background:#f6f6f6;border-radius:8px"></div>
<div class="t" style="top:566.17px;font-size:13.5px;font-weight:400;color:#303030;left:1383px;">Taxes</div>
<div class="t" style="top:566.43px;font-size:13.2px;font-weight:400;color:#303030;right:116.5px;letter-spacing:.3px">$2,997.94</div>
<svg class="abs" style="left:1811.0px;top:569.6px;" width="8" height="8" viewBox="0 0 8 8"><path d="M0.9 5.5 L4.4 2" stroke="#8a8a8a" stroke-width="1.7" stroke-linecap="round"/><path d="M1.9 0.7 L6.2 0.7 L6.2 5 Z" fill="#8a8a8a" stroke="#8a8a8a" stroke-width="0.6" stroke-linejoin="round"/></svg>
<div class="t" style="top:568.29px;font-size:11px;font-weight:700;color:#8a8a8a;left:1821.0px;">2.6K%</div>
<div class="abs" style="left:1371px;top:595.2px;width:494px;height:36.5px;background:#f6f6f6;border-radius:8px"></div>
<div class="t" style="top:606.77px;font-size:13.5px;font-weight:400;color:#303030;left:1383px;">Total sales</div>
<div class="t" style="top:607.03px;font-size:13.2px;font-weight:400;color:#303030;right:116.5px;letter-spacing:.3px">$44,381.93</div>
<svg class="abs" style="left:1811.0px;top:610.2px;" width="8" height="8" viewBox="0 0 8 8"><path d="M0.9 5.5 L4.4 2" stroke="#22804f" stroke-width="1.7" stroke-linecap="round"/><path d="M1.9 0.7 L6.2 0.7 L6.2 5 Z" fill="#22804f" stroke="#22804f" stroke-width="0.6" stroke-linejoin="round"/></svg>
<div class="t" style="top:608.89px;font-size:11px;font-weight:700;color:#22804f;left:1821.0px;">1.8K%</div>
<div class="card" style="left:264px;top:672px;width:529px;height:254px"></div>
<div class="card" style="left:810px;top:672px;width:529px;height:254px"></div>
<div class="card" style="left:1355px;top:672px;width:530px;height:254px"></div>
<div class="card" style="left:264px;top:942px;width:529px;height:40px"></div>
<div class="card" style="left:810px;top:942px;width:529px;height:40px"></div>
<div class="card" style="left:1355px;top:942px;width:530px;height:40px"></div>
<div class="t" style="top:687.95px;font-size:14px;font-weight:400;color:#303030;left:280px;">Total sales by sales channel</div>
<div class="abs" style="left:280px;top:702.9px;width:174px;height:1.5px;background-image:linear-gradient(to right,#b4b4b4 50%,transparent 50%);background-size:4px 1.5px"></div>
<svg class="abs" style="left:320px;top:725px;" width="190" height="185" viewBox="0 0 190 185"><defs>
<linearGradient id="dB" x1="0" y1="0" x2="0" y2="1"><stop offset="0" stop-color="#2f98d9"/><stop offset="1" stop-color="#40b0e8"/></linearGradient>
<linearGradient id="dP" x1="0" y1="0" x2="0" y2="1"><stop offset="0" stop-color="#a064e6"/><stop offset="1" stop-color="#8d52e0"/></linearGradient>
</defs><path d="M96.57 17.02 A75 75 0 1 1 20.41 99.84" stroke="url(#dB)" stroke-width="18" fill="none"/><path d="M20.20 97.49 A75 75 0 0 1 91.86 17.07" stroke="url(#dP)" stroke-width="18" fill="none"/></svg>
<div class="t" style="top:799.15px;font-size:20.5px;font-weight:700;color:#303030;left:115px;width:600px;text-align:center;letter-spacing:.3px">$44.4K</div>
<svg class="abs" style="left:393.5px;top:826px;" width="8" height="8" viewBox="0 0 8 8"><path d="M0.9 5.5 L4.4 2" stroke="#22804f" stroke-width="1.7" stroke-linecap="round"/><path d="M1.9 0.7 L6.2 0.7 L6.2 5 Z" fill="#22804f" stroke="#22804f" stroke-width="0.6" stroke-linejoin="round"/></svg>
<div class="t" style="top:824.69px;font-size:11px;font-weight:700;color:#22804f;left:403.5px;">1.8K%</div>
<div class="abs" style="left:529px;top:782.8px;width:12px;height:12px;background:linear-gradient(#32a0de,#45b2ea);border-radius:2.5px"></div>
<div class="t" style="top:782.82px;font-size:12.5px;font-weight:400;color:#616161;left:544.5px;">Online Store</div>
<div class="t" style="top:782.82px;font-size:12.5px;font-weight:400;color:#616161;right:1228px;">$32.7K</div>
<svg class="abs" style="left:692.5px;top:785.3px;" width="8" height="8" viewBox="0 0 8 8"><path d="M0.9 5.5 L4.4 2" stroke="#22804f" stroke-width="1.7" stroke-linecap="round"/><path d="M1.9 0.7 L6.2 0.7 L6.2 5 Z" fill="#22804f" stroke="#22804f" stroke-width="0.6" stroke-linejoin="round"/></svg>
<div class="t" style="top:784.41px;font-size:10.5px;font-weight:700;color:#22804f;left:701.5px;">1.8K%</div>
<div class="abs" style="left:529px;top:811px;width:12px;height:12px;background:linear-gradient(#9a5ee6,#7d3fd8);border-radius:2.5px"></div>
<div class="t" style="top:811.02px;font-size:12.5px;font-weight:400;color:#616161;left:544.5px;">Draft Orders</div>
<div class="t" style="top:811.02px;font-size:12.5px;font-weight:400;color:#616161;right:1228px;">$11.5K</div>
<svg class="abs" style="left:692.5px;top:813.5px;" width="8" height="8" viewBox="0 0 8 8"><path d="M0.9 5.5 L4.4 2" stroke="#22804f" stroke-width="1.7" stroke-linecap="round"/><path d="M1.9 0.7 L6.2 0.7 L6.2 5 Z" fill="#22804f" stroke="#22804f" stroke-width="0.6" stroke-linejoin="round"/></svg>
<div class="t" style="top:812.61px;font-size:10.5px;font-weight:700;color:#22804f;left:701.5px;">1.8K%</div>
<div class="abs" style="left:529px;top:838.7px;width:12px;height:12px;background:linear-gradient(#8a8ef0,#6a6fe0);border-radius:2.5px"></div>
<div class="t" style="top:838.72px;font-size:12.5px;font-weight:400;color:#616161;left:544.5px;">Shop</div>
<div class="t" style="top:838.72px;font-size:12.5px;font-weight:400;color:#616161;right:1228px;">$180.2</div>
<div class="abs" style="left:693px;top:844.9px;width:12px;height:1.4px;background:#616161"></div>
<div class="t" style="top:687.95px;font-size:14px;font-weight:400;color:#303030;left:826.7px;">Average order value over time</div>
<div class="abs" style="left:826.7px;top:702.9px;width:187px;height:1.5px;background-image:linear-gradient(to right,#b4b4b4 50%,transparent 50%);background-size:4px 1.5px"></div>
<div class="t" style="top:720.02px;font-size:21px;font-weight:700;color:#303030;left:826.7px;letter-spacing:.1px">$264.91</div>
<svg class="abs" style="left:911.5px;top:728.3px;" width="8" height="8" viewBox="0 0 8 8"><path d="M0.9 1.3 L4.4 4.8" stroke="#4a4a4a" stroke-width="1.7" stroke-linecap="round"/><path d="M1.9 6.1 L6.2 6.1 L6.2 1.8 Z" fill="#4a4a4a" stroke="#4a4a4a" stroke-width="0.6" stroke-linejoin="round"/></svg>
<div class="t" style="top:726.99px;font-size:11px;font-weight:700;color:#616161;left:921.5px;">26%</div>
<div class="abs" style="left:880px;top:766.5px;width:440px;height:1px;background:#ececec"></div>
<div class="t" style="top:761.69px;font-size:11px;font-weight:400;color:#6b6b6b;left:828px;">$1K</div>
<div class="abs" style="left:880px;top:839.2px;width:440px;height:1px;background:#ececec"></div>
<div class="t" style="top:834.39px;font-size:11px;font-weight:400;color:#6b6b6b;left:828px;">$0</div>
<div class="t" style="top:854.84px;font-size:12px;font-weight:400;color:#6b6b6b;left:580.2px;width:600px;text-align:center;">Nov 2023</div>
<div class="t" style="top:854.84px;font-size:12px;font-weight:400;color:#6b6b6b;left:690.07px;width:600px;text-align:center;">Feb 2024</div>
<div class="t" style="top:854.84px;font-size:12px;font-weight:400;color:#6b6b6b;left:799.94px;width:600px;text-align:center;">May 2024</div>
<div class="t" style="top:854.84px;font-size:12px;font-weight:400;color:#6b6b6b;left:909.81px;width:600px;text-align:center;">Aug 2024</div>
<svg class="abs" style="left:860px;top:760px;" width="480" height="100" viewBox="0 0 480 100"><defs><linearGradient id="aovA" x1="0" y1="34.799999999999955" x2="0" y2="79.70000000000005" gradientUnits="userSpaceOnUse"><stop offset="0" stop-color="#58b4e6" stop-opacity="0.09"/><stop offset="1" stop-color="#58b4e6" stop-opacity="0.01"/></linearGradient></defs><path d="M20.20 68.40 C38.51 68.40 38.51 50.00 56.83 50.00 C75.14 50.00 75.14 60.50 93.45 60.50 C111.76 60.50 111.76 64.50 130.08 64.50 C148.39 64.50 148.39 34.80 166.70 34.80 C185.01 34.80 185.01 49.50 203.33 49.50 C221.64 49.50 221.64 62.00 239.95 62.00 C258.26 62.00 258.26 69.50 276.58 69.50 C294.89 69.50 294.89 66.80 313.20 66.80 C331.51 66.80 331.51 72.80 349.83 72.80 C368.14 72.80 368.14 69.50 386.45 69.50 C404.76 69.50 404.76 58.20 423.08 58.20 C441.39 58.20 441.39 80.20 459.70 80.20 L459.7 79.70000000000005 L20.2 79.70000000000005 Z" fill="url(#aovA)"/><path d="M20.20 68.40 C38.51 68.40 38.51 50.00 56.83 50.00 C75.14 50.00 75.14 60.50 93.45 60.50 C111.76 60.50 111.76 64.50 130.08 64.50 C148.39 64.50 148.39 34.80 166.70 34.80 C185.01 34.80 185.01 49.50 203.33 49.50 C221.64 49.50 221.64 62.00 239.95 62.00 C258.26 62.00 258.26 69.50 276.58 69.50 C294.89 69.50 294.89 66.80 313.20 66.80 C331.51 66.80 331.51 72.80 349.83 72.80 C368.14 72.80 368.14 69.50 386.45 69.50 C404.76 69.50 404.76 58.20 423.08 58.20 C441.39 58.20 441.39 80.20 459.70 80.20" stroke="#4e9fcc" stroke-width="2" fill="none" stroke-linecap="round"/><path d="M20.20 53.50 C38.50 53.50 38.50 80.00 56.80 80.00 C258.25 80.00 258.25 80.00 459.70 80.00" stroke="#7fb8d8" stroke-width="1.5" fill="none" stroke-dasharray="1.5 2.5"/></svg>
<div class="abs" style="left:926px;top:897px;width:13px;height:2px;background:#4e9fcc;border-radius:1px"></div>
<div class="t" style="top:892.10px;font-size:11.7px;font-weight:400;color:#616161;left:946px;">Nov 4, 2023–Nov 2, 2024</div>
<svg class="abs" style="left:1096px;top:892px;" width="16" height="12" viewBox="0 0 16 12"><path d="M2 6 L14 6" stroke="#8bbfdc" stroke-width="1.6" stroke-dasharray="1.6 3"/></svg>
<div class="t" style="top:892.10px;font-size:11.7px;font-weight:400;color:#616161;left:1118.4px;">Oct 4–Nov 3, 2024</div>
<div class="t" style="top:687.95px;font-size:14px;font-weight:400;color:#303030;left:1371.3px;">Total sales by product</div>
<div class="abs" style="left:1371.3px;top:702.9px;width:137px;height:1.5px;background-image:linear-gradient(to right,#b4b4b4 50%,transparent 50%);background-size:4px 1.5px"></div>
<div class="t" style="top:727.90px;font-size:11.7px;font-weight:400;color:#616161;left:1371.3px;">8 Foot Artificial Silk Phoenix Palm Tree for Indoor and Outdoor · Silk Plants Canada · Artificial ...</div>
<div class="abs" style="left:1371px;top:744.3px;width:403px;height:30.6px;background:linear-gradient(to right,#2f95d5,#4db6eb);border-top-right-radius:3px;border-bottom-right-radius:3px"></div>
<div class="t" style="top:753.87px;font-size:11.5px;font-weight:400;color:#616161;left:1784.2px;">$3.1K</div>
<div class="abs" style="left:1371px;top:778px;width:1px;height:30px;background:#c5d5e0"></div>
<div class="t" style="top:787.47px;font-size:11.5px;font-weight:400;color:#616161;left:1382px;">$0</div>
<div class="t" style="top:828.88px;font-size:11.6px;font-weight:400;color:#616161;left:1371.3px;">12 Foot Artificial Silk Silver Birch Tree Custom Made on Natural Wood · Silk Plants Canada · Ar...</div>
<div class="abs" style="left:1371px;top:845.3px;width:260px;height:30.6px;background:linear-gradient(to right,#2f95d5,#47b0e6)"></div>
<div class="abs" style="left:1371px;top:879px;width:1px;height:30px;background:#c5d5e0"></div>
<div class="t" style="top:888.37px;font-size:11.5px;font-weight:400;color:#616161;left:1382px;">$0</div>
<div class="abs" style="left:1586px;top:844.5px;width:208px;height:88.5px;background:linear-gradient(125deg,#e0ecf8 0%,#edf3f9 40%,#f7f8fa 100%);border-radius:8px;box-shadow:0 3px 6px rgba(0,0,0,.16),0 0 0 1px rgba(0,0,0,.05)"></div>
<div class="abs" style="left:1711px;top:850px;width:37px;height:38px;background:rgba(255,255,255,.6);border-radius:4px"></div>
<svg class="abs" style="left:1600px;top:859px;" width="20" height="20" viewBox="0 0 20 20"><rect x="2" y="2.2" width="16.4" height="16" rx="6.5" fill="#67a72a"/><path d="M6.2 10.2 L8.8 12.6 L13.6 7.6" stroke="#fff" stroke-width="2" fill="none" stroke-linecap="round" stroke-linejoin="round"/></svg>
<svg class="abs" style="left:1640px;top:859px;" width="22" height="20" viewBox="0 0 22 20"><path d="M2 4.6 L12.6 8 L7.6 17.6 Z" fill="#5c5c66"/><path d="M7.6 17.6 L12.6 8 L10.4 15.4 Z" fill="#9a9aa2"/><circle cx="13.6" cy="6" r="5" fill="#d8344a" stroke="#f4f7fa" stroke-width="1"/><path d="M11.8 4.2 L15.4 7.8 M15.4 4.2 L11.8 7.8" stroke="#fff" stroke-width="1.3"/></svg>
<svg class="abs" style="left:1680px;top:860px;" width="19" height="19" viewBox="0 0 19 19"><g stroke="#4a4a4a" stroke-width="0.9" fill="none"><rect x="5.2" y="1.8" width="3.6" height="15.4" rx="1.8"/><rect x="10.2" y="1.8" width="3.6" height="15.4" rx="1.8"/><rect x="1.8" y="5.2" width="15.4" height="3.6" rx="1.8"/><rect x="1.8" y="10.2" width="15.4" height="3.6" rx="1.8"/></g></svg>
<svg class="abs" style="left:1720px;top:859px;" width="20" height="20" viewBox="0 0 20 20"><path d="M3 17.4 C5 12 10 5.6 17.4 2.2 C16.6 7.6 11.8 13.6 5.4 15.6 Z" fill="#9b6fd6"/><path d="M3 17.6 L12 8" stroke="#6a3fb8" stroke-width="0.8"/></svg>
<svg class="abs" style="left:1760px;top:859px;" width="20" height="20" viewBox="0 0 20 20"><path d="M4 6 C4 3.6 6.6 2 10 2 C13.4 2 16 3.6 16 6 L14.8 6 L14.4 17.4 C14.4 18 14 18.2 13.4 18.2 L6.6 18.2 C6 18.2 5.6 18 5.6 17.4 L5.2 6 Z" fill="#2a2a2a"/><path d="M7.8 8.6 L7.8 15.4 M12.2 8.6 L12.2 15.4 M7.8 12 L12.2 12" stroke="#ddd" stroke-width="1.3"/><path d="M6.4 4.6 C8 3.6 12 3.6 13.6 4.6" stroke="#888" stroke-width="0.8" fill="none"/></svg>
<svg class="abs" style="left:1600px;top:899px;" width="22" height="20" viewBox="0 0 22 20"><path d="M10 1.8 L17.6 4.4 L17.6 9.6 C17.6 13.8 14.6 16.8 10 18.4 C5.4 16.8 2.4 13.8 2.4 9.6 L2.4 4.4 Z" fill="#1f8ad6"/><path d="M10 1.8 L17.6 4.4 L17.6 9.6 C17.6 13.8 14.6 16.8 10 18.4 Z" fill="#2ba3ec"/><path d="M13.6 9.6 L20 19.4 L7.2 19.4 Z" fill="#f7c325" stroke="#f4f7fa" stroke-width="0.8"/><path d="M13.6 12.6 L13.6 16" stroke="#333" stroke-width="1.3"/><circle cx="13.6" cy="17.6" r="0.7" fill="#333"/></svg>
<svg class="abs" style="left:1640px;top:899px;" width="20" height="20" viewBox="0 0 20 20"><rect x="3.6" y="1.6" width="12.6" height="16.6" rx="6.3" fill="#1577d6"/><path d="M7 6.6 L13 12.6 L10 15.4 L10 4.4 L13 7.2 L7 13.2" stroke="#fff" stroke-width="1.2" fill="none" stroke-linejoin="round"/></svg>
<svg class="abs" style="left:1909px;top:59px;" width="9" height="8" viewBox="0 0 9 8"><path d="M3 6 L5.4 2.8 L7.8 6 Z" fill="#8a8a8a"/></svg>
<svg class="abs" style="left:1909px;top:935px;" width="9" height="8" viewBox="0 0 9 8"><path d="M3 2 L5.4 5.2 L7.8 2 Z" fill="#8a8a8a"/></svg>
</body></html>
